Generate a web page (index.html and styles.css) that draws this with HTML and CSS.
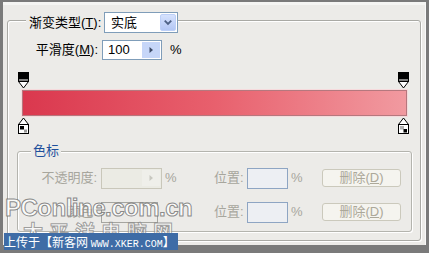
FILE: index.html
```html
<!DOCTYPE html>
<html lang="zh">
<head>
<meta charset="utf-8">
<title>渐变编辑器</title>
<link rel="stylesheet" href="styles.css">
</head>
<body>
<div class="frame">
  <div class="panel">
    <div class="group">
      <div class="group-head">
        <span class="legend-label">渐变类型(<u>T</u>):</span>
        <div class="select">
          <span class="select-value">实底</span>
          <span class="select-btn">
            <svg width="15" height="15" viewBox="0 0 15 15"><path d="M4 5.5 L7.5 9 L11 5.5" fill="none" stroke="#4d6185" stroke-width="2"/></svg>
          </span>
        </div>
      </div>

      <div class="smooth-row">
        <span class="lbl smooth-lbl">平滑度(<u>M</u>):</span>
        <div class="spin">
          <span class="spin-value">100</span>
          <span class="spin-btn">
            <svg width="8" height="8" viewBox="0 0 8 8"><path d="M2.5 1 L6 4 L2.5 7 Z" fill="#3c4a66"/></svg>
          </span>
        </div>
        <span class="unit smooth-unit">%</span>
      </div>

      <div class="gradient-editor">
        <div class="stops">
          <svg width="11" height="17" viewBox="0 0 11 17"><rect x="0.5" y="0.5" width="10" height="9" fill="#000" stroke="#000"/><rect x="1" y="7" width="9" height="2.5" fill="#808080"/><path d="M0.5 9.5 L5.5 16 L10.5 9.5 Z" fill="#fff" stroke="#000"/></svg>
          <svg width="11" height="17" viewBox="0 0 11 17"><rect x="0.5" y="0.5" width="10" height="9" fill="#000" stroke="#000"/><rect x="1" y="7" width="9" height="2.5" fill="#808080"/><path d="M0.5 9.5 L5.5 16 L10.5 9.5 Z" fill="#fff" stroke="#000"/></svg>
        </div>
        <div class="bar"></div>
        <div class="stops">
          <svg width="11" height="17" viewBox="0 0 11 17"><path d="M0.5 7.5 L5.5 1 L10.5 7.5 Z" fill="#fff" stroke="#000"/><rect x="0.5" y="7.5" width="10" height="9" fill="#fff" stroke="#000"/><rect x="2" y="9" width="4" height="3.5" fill="#000"/><rect x="6" y="12.5" width="3" height="3" fill="#9a9a9a"/></svg>
          <svg width="11" height="17" viewBox="0 0 11 17"><path d="M0.5 7.5 L5.5 1 L10.5 7.5 Z" fill="#fff" stroke="#000"/><rect x="0.5" y="7.5" width="10" height="9" fill="#fff" stroke="#000"/><rect x="2" y="9" width="4" height="3.5" fill="#b0b0b0"/><rect x="5.5" y="12" width="3.5" height="3.5" fill="#000"/></svg>
        </div>
      </div>

      <div class="subgroup">
        <div class="subgroup-head"><span class="sub-title">色标</span></div>
        <div class="stop-row first">
          <span class="lbl dis row-lbl">不透明度:</span>
          <div class="spin spin-dis">
            <span class="spin-value"></span>
            <span class="spin-btn">
              <svg width="8" height="8" viewBox="0 0 8 8"><path d="M2.5 1 L6 4 L2.5 7 Z" fill="#c8c8c0"/></svg>
            </span>
          </div>
          <span class="unit dis row-unit">%</span>
          <span class="lbl dis pos-lbl">位置:</span>
          <div class="pos-box"></div>
          <span class="unit dis pos-unit">%</span>
          <button class="btn" disabled>删除(<u>D</u>)</button>
        </div>
        <div class="stop-row second">
          <span class="lbl dis row-lbl">颜色:</span>
          <div class="color-box"></div>
          <span class="unit dis row-unit color-unit"></span>
          <span class="lbl dis pos-lbl">位置:</span>
          <div class="pos-box"></div>
          <span class="unit dis pos-unit">%</span>
          <button class="btn" disabled>删除(<u>D</u>)</button>
        </div>
      </div>
    </div>
  </div>

  <div class="watermark">
    <div class="wm-logo">PConline.com.cn</div>
    <div class="wm-cn">太平洋电脑网</div>
  </div>
  <div class="upload-tag">上传于【新客网 <span class="tag-latin">WWW.XKER.COM</span>】</div>
</div>
</body>
</html>
```

FILE: styles.css
```css
html, body {
  margin: 0;
  padding: 0;
}

body {
  font-family: "Liberation Sans", "Noto Sans CJK SC", sans-serif;
  font-size: 13px;
  color: #000;
  background: #7a7a7a;
}

.frame {
  position: relative;
  width: 429px;
  height: 253px;
  box-sizing: border-box;
  padding: 2px 3px 8px 3px;
  background: #7a7a7a;
  overflow: hidden;
}

.panel {
  height: 100%;
  box-sizing: border-box;
  background: #ecebe8;
  border-top: 3px solid #f5f5f3;
  border-right: 1px solid #f8f8f8;
  display: flex;
  flex-direction: column;
}

.group {
  flex: 1;
  margin: 15px 4px 4px 4px;
  border: 1px solid #a9a9a4;
  border-radius: 3px;
  box-shadow: 1px 1px 0 #fff, inset 1px 1px 0 #fff;
  display: flex;
  flex-direction: column;
}

.group-head {
  display: flex;
  align-items: center;
  margin: -9px 0 0 18px;
  height: 21px;
}

.legend-label {
  background: #ecebe8;
  width: 75px;
  padding-left: 3px;
  line-height: 16px;
  white-space: nowrap;
}

.select {
  width: 74px;
  height: 21px;
  box-sizing: border-box;
  border: 1px solid #7f9db9;
  background: #fff;
  display: flex;
  align-items: center;
  justify-content: space-between;
  padding: 1px;
}

.select-value {
  padding-left: 5px;
  line-height: 16px;
}

.select-btn {
  width: 16px;
  height: 17px;
  box-sizing: border-box;
  border: 1px solid #bdd0f8;
  border-radius: 2px;
  background: linear-gradient(#d6e2fd, #b3c7f5);
  display: flex;
  align-items: center;
  justify-content: center;
}

.smooth-row {
  display: flex;
  align-items: center;
  height: 20px;
  margin-top: 7px;
}

.lbl {
  white-space: nowrap;
  line-height: 16px;
}

.smooth-lbl {
  margin-left: 26px;
  width: 64px;
  text-align: right;
}

.spin {
  margin-left: 4px;
  width: 60px;
  height: 20px;
  box-sizing: border-box;
  border: 1px solid #7f9db9;
  background: #fff;
  display: flex;
  align-items: center;
  justify-content: space-between;
  padding: 1px;
}

.spin-value {
  padding-left: 4px;
  line-height: 16px;
}

.spin-btn {
  width: 18px;
  height: 16px;
  background: #c6d6f8;
  display: flex;
  align-items: center;
  justify-content: center;
}

.unit {
  line-height: 16px;
}

.smooth-unit {
  margin-left: 8px;
}

.gradient-editor {
  margin: 12px 0 0 10px;
  width: 392px;
}

.stops {
  display: flex;
  justify-content: space-between;
  width: 391px;
  height: 17px;
}

.stops svg {
  display: block;
}

.bar {
  margin: 1px 3px 1px 4px;
  height: 26px;
  box-sizing: border-box;
  border: 1px solid #b5787e;
  background: linear-gradient(to right, #da384e, #e8606d 50%, #f19aa0);
  box-shadow: 0 0 0 1px #f6dadc;
}

.subgroup {
  margin: 17px 8px 0 9px;
  height: 81px;
  box-sizing: border-box;
  border: 1px solid #b4b4ae;
  border-radius: 3px;
  box-shadow: 1px 1px 0 #fff, inset 1px 1px 0 #fff;
  display: flex;
  flex-direction: column;
}

.subgroup-head {
  display: flex;
  margin-top: -8px;
  padding-left: 13px;
  height: 14px;
}

.sub-title {
  background: #ecebe8;
  padding: 0 2px;
  color: #1d4f9c;
  line-height: 14px;
}

.stop-row {
  display: flex;
  align-items: center;
  height: 22px;
}

.stop-row.first {
  margin-top: 9px;
}

.stop-row.second {
  margin-top: 12px;
}

.dis {
  color: #a7a69d;
}

.row-lbl {
  width: 79px;
  text-align: right;
}

.spin-dis {
  margin-left: 4px;
  width: 61px;
  height: 21px;
  border-color: #c9c7ba;
  background: #ebebe4;
}

.spin-dis .spin-btn {
  background: #efefea;
}

.row-unit {
  margin-left: 3px;
  width: 12px;
}

.color-box {
  margin-left: 4px;
  width: 57px;
  height: 21px;
  box-sizing: border-box;
  border: 1px solid #a5a5a0;
  background: #ecebe8;
}

.color-unit {
  margin-left: 7px;
}

.pos-lbl {
  margin-left: 37px;
  width: 31px;
}

.pos-box {
  margin-left: 2px;
  width: 41px;
  height: 21px;
  box-sizing: border-box;
  border: 1px solid #8ea5c3;
  background: #edeff3;
}

.pos-unit {
  margin-left: 3px;
  width: 12px;
}

.btn {
  margin-left: 19px;
  width: 79px;
  height: 18px;
  box-sizing: border-box;
  border: 1px solid #cbc9bc;
  border-radius: 3px;
  background: #f5f4ef;
  color: #aca899;
  font-family: "Liberation Sans", "Noto Sans CJK SC", sans-serif;
  font-size: 13px;
  line-height: 14px;
  padding: 0;
}

.watermark {
  position: absolute;
  left: 5px;
  top: 195px;
  pointer-events: none;
}

.wm-logo {
  font-family: "Liberation Sans", sans-serif;
  font-weight: bold;
  font-size: 24px;
  letter-spacing: -0.5px;
  line-height: 26px;
  color: rgba(255, 255, 255, 0.75);
  -webkit-text-stroke: 1px rgba(110, 110, 110, 0.8);
}

.wm-cn {
  margin-left: 18px;
  font-family: "Noto Sans CJK SC", sans-serif;
  font-weight: bold;
  font-size: 20px;
  letter-spacing: 6px;
  line-height: 22px;
  color: rgba(255, 255, 255, 0.7);
  -webkit-text-stroke: 1px rgba(120, 120, 120, 0.7);
}

.upload-tag {
  position: absolute;
  left: 4px;
  top: 233px;
  width: 174px;
  height: 17px;
  background: #3e6ca6;
  color: #fff;
  font-family: "Noto Sans CJK SC", sans-serif;
  font-size: 12px;
  line-height: 17px;
  white-space: nowrap;
  overflow: hidden;
}

.tag-latin {
  font-family: "Liberation Mono", monospace;
  font-size: 10px;
}
```
